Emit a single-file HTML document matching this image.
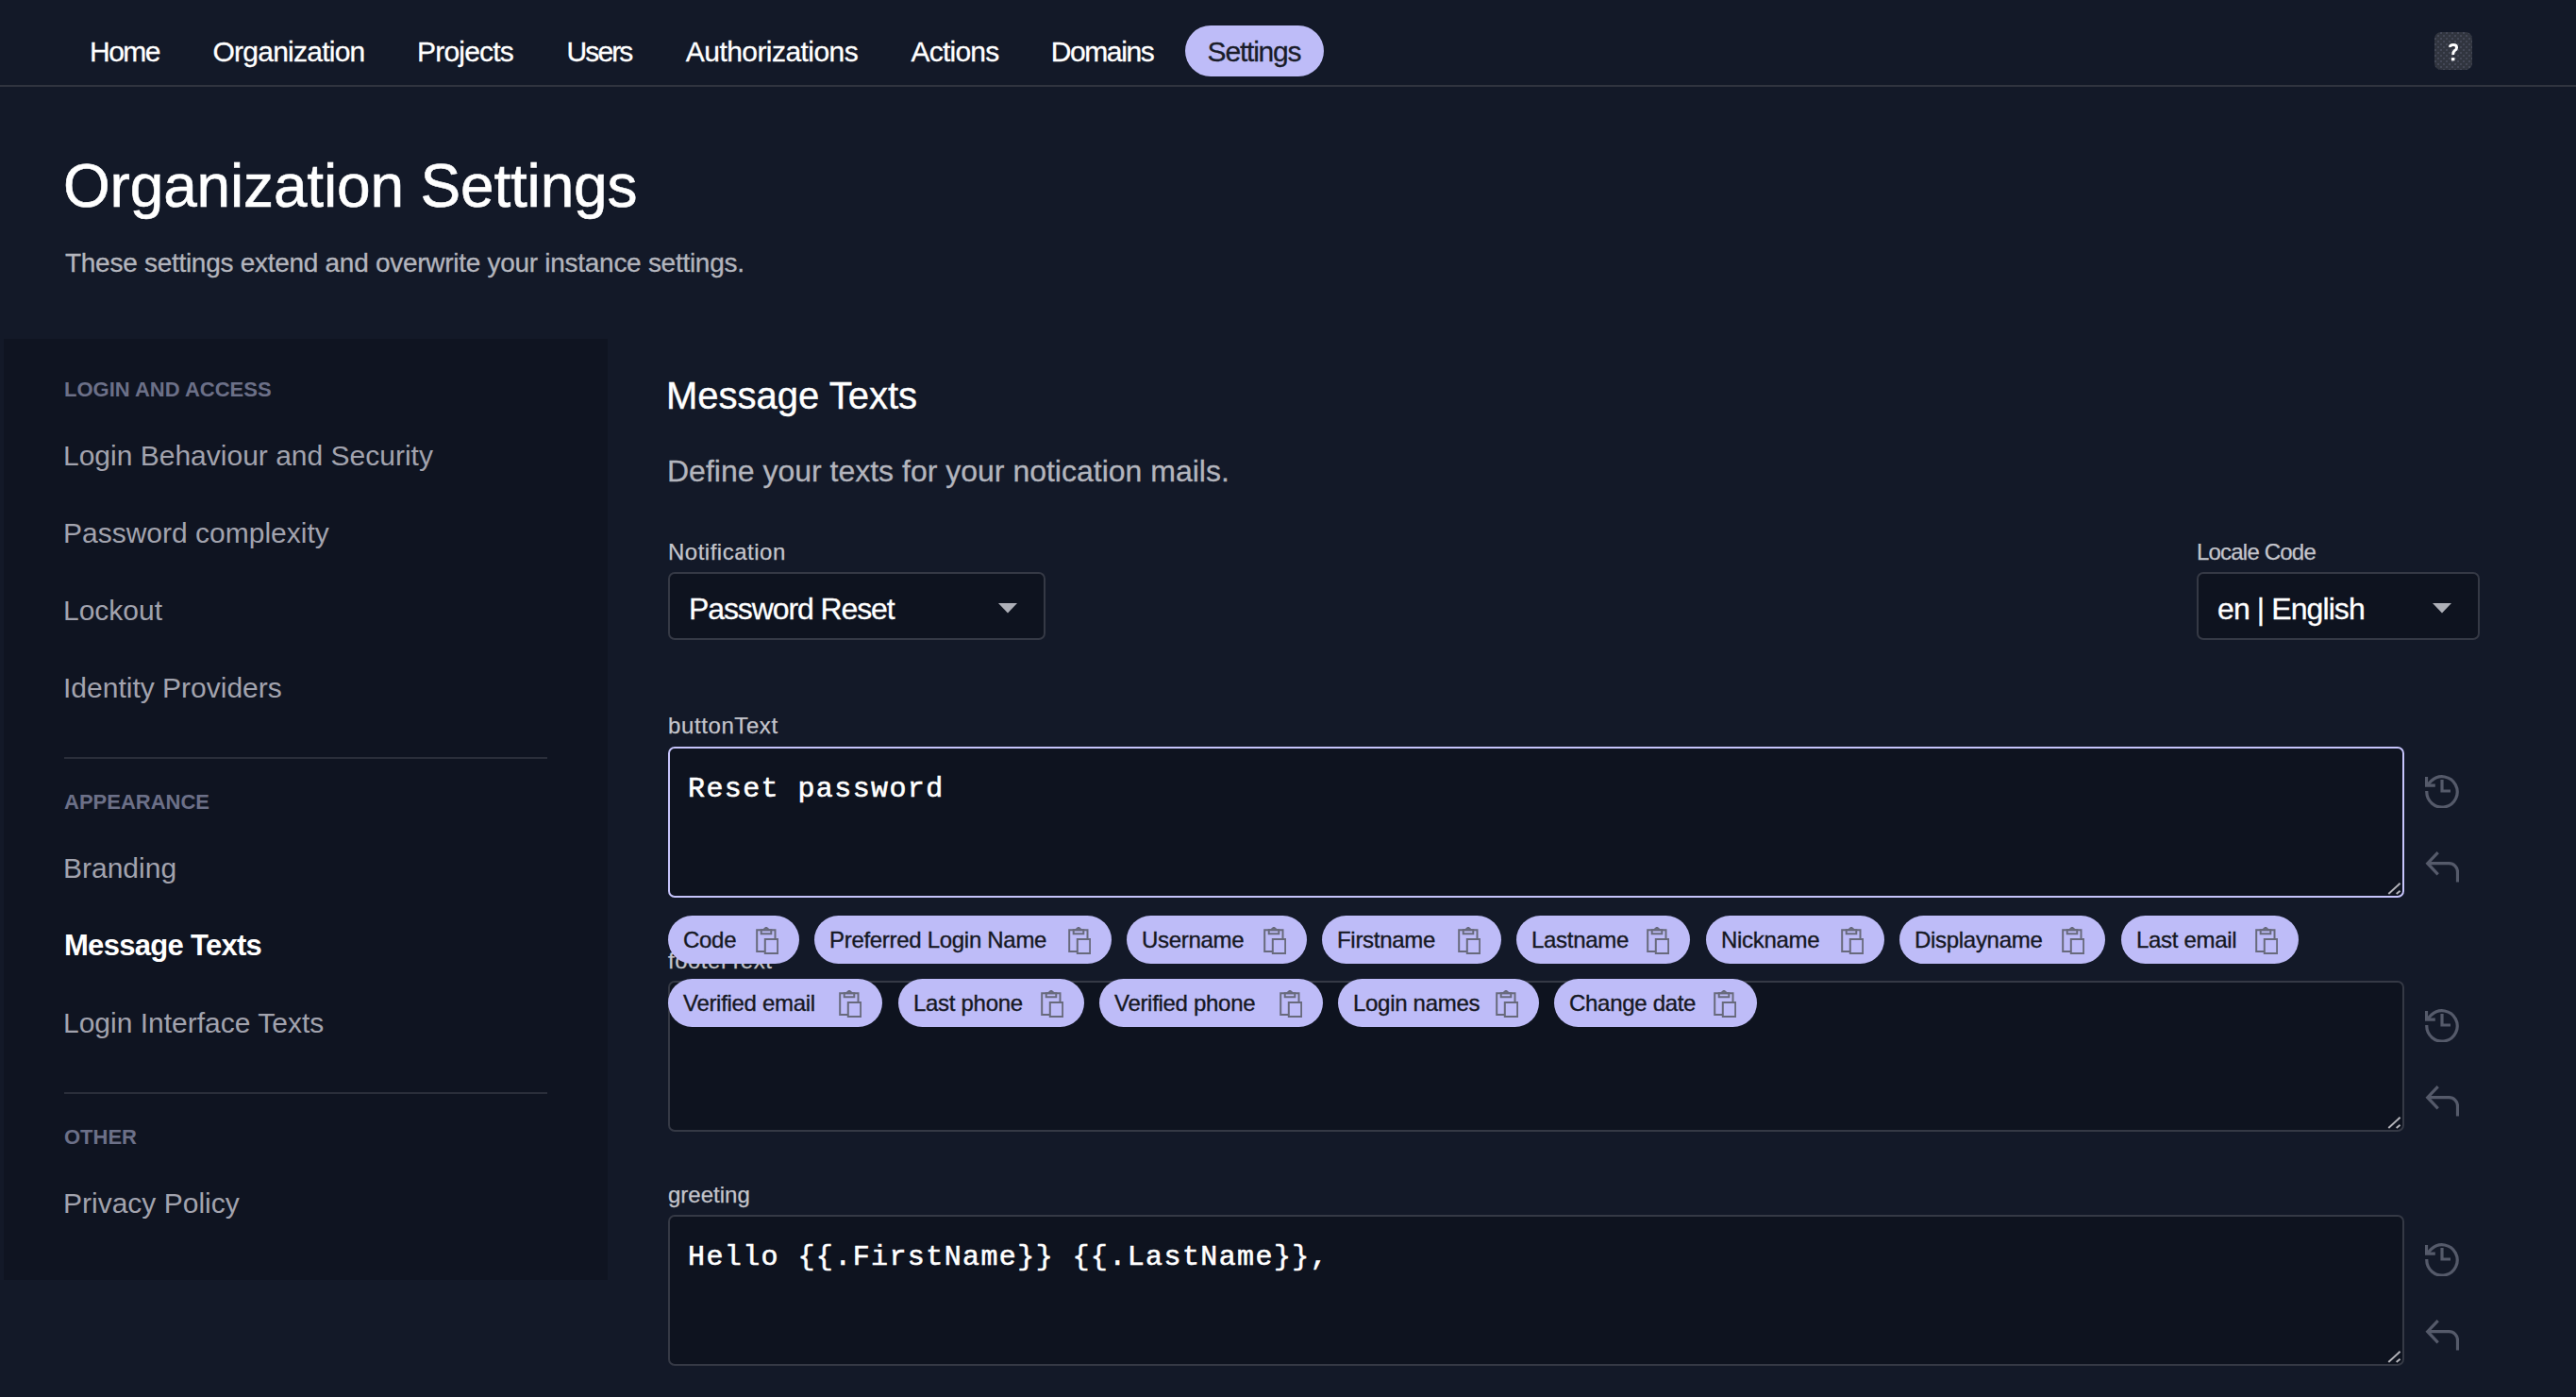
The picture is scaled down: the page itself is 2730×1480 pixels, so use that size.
<!DOCTYPE html>
<html><head><meta charset="utf-8">
<style>
html,body{margin:0;padding:0;}
body{width:2730px;height:1480px;overflow:hidden;background:#131928;position:relative;font-family:"Liberation Sans",sans-serif;}
.a{position:absolute;white-space:nowrap;}
.nav{font-size:30px;line-height:30px;top:40px;color:#ffffff;width:300px;text-align:center;-webkit-text-stroke-width:0.3px;}
.navline{left:0;top:90px;width:2730px;height:2px;background:#30343f;}
.pill{left:1256px;top:27px;width:147px;height:54px;border-radius:27px;background:#bebcf8;}
.help{left:2580px;top:34px;width:40px;height:40px;border-radius:7px;background:radial-gradient(circle,#4a4e5e 0.6px,rgba(0,0,0,0) 1px) 1px 1px/6px 6px,radial-gradient(circle,#4a4e5e 0.6px,rgba(0,0,0,0) 1px) 4px 4px/6px 6px,#31353f;color:#fff;font-weight:bold;font-size:24px;line-height:40px;text-align:center;}
.side{left:4px;top:359px;width:640px;height:997px;background:#0f1421;}
.sh{font-size:22px;line-height:22px;font-weight:bold;color:#6c7088;left:68px;}
.si{font-size:30px;line-height:30px;color:#a2a3ae;left:67px;}
.div{left:68px;width:512px;height:2px;background:#2a2e3a;}
.lbl{font-size:24px;line-height:24px;color:#c4c5cc;-webkit-text-stroke-width:0.25px;}
.sel{border:2px solid #353945;border-radius:7px;background:#0e131f;box-sizing:border-box;}
.ta{border:2px solid #353945;border-radius:7px;background:#0e131f;box-sizing:border-box;left:708px;width:1840px;height:160px;}
.mono{font-family:"Liberation Mono",monospace;font-weight:normal;-webkit-text-stroke-width:0.6px;font-size:30px;line-height:30px;letter-spacing:1.4px;color:#ffffff;}
.chip{height:51px;border-radius:26px;background:#bebcf8;box-sizing:border-box;}
.chip span{position:absolute;left:16px;top:14px;font-size:24px;line-height:24px;color:#161823;letter-spacing:-0.3px;-webkit-text-stroke:0.35px #161823;}
.chip svg{position:absolute;right:22px;top:12px;}
.ico{left:2570px;}
</style></head><body>

<!-- NAV -->
<div class="a pill"></div>
<div class="a nav" style="left:-18px;letter-spacing:-1.5px">Home</div>
<div class="a nav" style="left:156px;letter-spacing:-0.76px">Organization</div>
<div class="a nav" style="left:343px;letter-spacing:-0.8px">Projects</div>
<div class="a nav" style="left:485px;letter-spacing:-1.9px">Users</div>
<div class="a nav" style="left:668px;letter-spacing:-0.55px">Authorizations</div>
<div class="a nav" style="left:862px;letter-spacing:-0.8px">Actions</div>
<div class="a nav" style="left:1018px;letter-spacing:-1.4px">Domains</div>
<div class="a nav" style="left:1179px;letter-spacing:-1.2px;color:#1a1c29">Settings</div>
<div class="a help"><svg width="40" height="40" viewBox="0 0 40 40" style="position:absolute;left:0;top:0"><path d="M16.4 15.8C16.5 14.2 17.8 13.5 20 13.5C22.2 13.5 23.6 14.6 23.6 16.4C23.6 18.1 22.5 18.8 21.3 19.7C20.2 20.5 19.7 21.3 19.7 23.9" stroke="#fff" stroke-width="2.9" fill="none"/><rect x="17.9" y="27.1" width="3.5" height="3.2" fill="#fff"/></svg></div>
<div class="a navline"></div>

<!-- HEADER -->
<div class="a" style="left:67px;top:165px;font-size:64px;line-height:64px;color:#ffffff;letter-spacing:-0.17px;-webkit-text-stroke-width:0.6px">Organization Settings</div>
<div class="a" style="left:69px;top:265px;font-size:28px;line-height:28px;color:#b3b5bd;letter-spacing:-0.28px;-webkit-text-stroke-width:0.3px">These settings extend and overwrite your instance settings.</div>

<!-- SIDEBAR -->
<div class="a side"></div>
<div class="a sh" style="top:402px">LOGIN AND ACCESS</div>
<div class="a si" style="top:468px">Login Behaviour and Security</div>
<div class="a si" style="top:550px">Password complexity</div>
<div class="a si" style="top:632px">Lockout</div>
<div class="a si" style="top:714px">Identity Providers</div>
<div class="a div" style="top:802px"></div>
<div class="a sh" style="top:839px">APPEARANCE</div>
<div class="a si" style="top:905px">Branding</div>
<div class="a si" style="top:986px;left:68px;font-size:31px;line-height:31px;letter-spacing:-0.7px;color:#ffffff;font-weight:bold">Message Texts</div>
<div class="a si" style="top:1069px">Login Interface Texts</div>
<div class="a div" style="top:1157px"></div>
<div class="a sh" style="top:1194px">OTHER</div>
<div class="a si" style="top:1260px">Privacy Policy</div>

<!-- CONTENT -->
<div class="a" style="left:706px;top:399px;font-size:40px;line-height:40px;color:#ffffff;-webkit-text-stroke-width:0.4px">Message Texts</div>
<div class="a" style="left:707px;top:483px;font-size:32px;line-height:32px;color:#b3b5bd;-webkit-text-stroke-width:0.3px">Define your texts for your notication mails.</div>

<div class="a lbl" style="left:708px;top:573px;letter-spacing:0.5px">Notification</div>
<div class="a sel" style="left:708px;top:606px;width:400px;height:72px"></div>
<div class="a" style="left:730px;top:629px;font-size:32px;line-height:32px;color:#fff;letter-spacing:-1.1px;-webkit-text-stroke-width:0.3px">Password Reset</div>
<svg class="a" style="left:1058px;top:639px" width="20" height="11" viewBox="0 0 20 11"><path d="M0 0H20L10 10.5Z" fill="#aeb0b8"/></svg>

<div class="a lbl" style="left:2328px;top:573px;letter-spacing:-0.8px">Locale Code</div>
<div class="a sel" style="left:2328px;top:606px;width:300px;height:72px"></div>
<div class="a" style="left:2350px;top:629px;font-size:32px;line-height:32px;color:#fff;letter-spacing:-0.9px;-webkit-text-stroke-width:0.3px">en | English</div>
<svg class="a" style="left:2578px;top:639px" width="20" height="11" viewBox="0 0 20 11"><path d="M0 0H20L10 10.5Z" fill="#aeb0b8"/></svg>

<!-- buttonText -->
<div class="a lbl" style="left:708px;top:757px;letter-spacing:0.6px">buttonText</div>
<div class="a ta" style="top:791px;border-color:#c6c4fb"></div>
<div class="a mono" style="left:729px;top:821px">Reset password</div>

<!-- footerText -->
<div class="a lbl" style="left:708px;top:1006px;letter-spacing:0.5px">footerText</div>
<div class="a ta" style="top:1039px"></div>

<!-- greeting -->
<div class="a lbl" style="left:708px;top:1254px">greeting</div>
<div class="a ta" style="top:1287px"></div>
<div class="a mono" style="left:729px;top:1317px">Hello {{.FirstName}} {{.LastName}},</div>

<!-- resize handles -->
<svg class="a" style="left:2527px;top:931px" width="18" height="18" viewBox="0 0 18 18" stroke="#b4b4ba" stroke-width="2"><path d="M4.3 16L16.6 4.8M12.7 16L16.6 12.7"/></svg>
<svg class="a" style="left:2527px;top:1179px" width="18" height="18" viewBox="0 0 18 18" stroke="#b4b4ba" stroke-width="2"><path d="M4.3 16L16.6 4.8M12.7 16L16.6 12.7"/></svg>
<svg class="a" style="left:2527px;top:1427px" width="18" height="18" viewBox="0 0 18 18" stroke="#b4b4ba" stroke-width="2"><path d="M4.3 16L16.6 4.8M12.7 16L16.6 12.7"/></svg>

<!-- history/undo icons -->
<svg class="a ico" style="top:820px" width="36" height="36" viewBox="0 0 36 36" fill="none" stroke="#555a6a" stroke-width="3.2"><path d="M1.8 18A16.2 16.2 0 1 0 7 7L2 12.2"/><path d="M1.5 3V12.2H10.8"/><path d="M18 6V18H27"/></svg>
<svg class="a ico" style="top:900px" width="36" height="36" viewBox="0 0 36 36" fill="none" stroke="#555a6a" stroke-width="3.2"><path d="M13.7 3.2L2.7 14.7L13.7 26.4"/><path d="M2.7 14.7H25.5A9 9 0 0 1 34.5 23.7V34.6"/></svg>
<svg class="a ico" style="top:1068px" width="36" height="36" viewBox="0 0 36 36" fill="none" stroke="#555a6a" stroke-width="3.2"><path d="M1.8 18A16.2 16.2 0 1 0 7 7L2 12.2"/><path d="M1.5 3V12.2H10.8"/><path d="M18 6V18H27"/></svg>
<svg class="a ico" style="top:1148px" width="36" height="36" viewBox="0 0 36 36" fill="none" stroke="#555a6a" stroke-width="3.2"><path d="M13.7 3.2L2.7 14.7L13.7 26.4"/><path d="M2.7 14.7H25.5A9 9 0 0 1 34.5 23.7V34.6"/></svg>
<svg class="a ico" style="top:1316px" width="36" height="36" viewBox="0 0 36 36" fill="none" stroke="#555a6a" stroke-width="3.2"><path d="M1.8 18A16.2 16.2 0 1 0 7 7L2 12.2"/><path d="M1.5 3V12.2H10.8"/><path d="M18 6V18H27"/></svg>
<svg class="a ico" style="top:1396px" width="36" height="36" viewBox="0 0 36 36" fill="none" stroke="#555a6a" stroke-width="3.2"><path d="M13.7 3.2L2.7 14.7L13.7 26.4"/><path d="M2.7 14.7H25.5A9 9 0 0 1 34.5 23.7V34.6"/></svg>

<!-- CHIPS -->
<div id="chips">
<div class="a chip" style="left:708px;top:970px;width:139px"><span>Code</span><svg width="24" height="29" viewBox="0 0 24 29" fill="none" stroke="#686a7c" stroke-width="2"><path d="M1.2 3.3H20.5V25.9H1.2Z"/><path d="M5.7 3.3H16.3V7.2H5.7Z"/><path d="M7.9 3.3L11 0.6L14.1 3.3" stroke-linejoin="round"/><path d="M9.8 13H23.2V27.9H9.8Z" fill="#bebcf8"/></svg></div>
<div class="a chip" style="left:863px;top:970px;width:315px"><span>Preferred Login Name</span><svg width="24" height="29" viewBox="0 0 24 29" fill="none" stroke="#686a7c" stroke-width="2"><path d="M1.2 3.3H20.5V25.9H1.2Z"/><path d="M5.7 3.3H16.3V7.2H5.7Z"/><path d="M7.9 3.3L11 0.6L14.1 3.3" stroke-linejoin="round"/><path d="M9.8 13H23.2V27.9H9.8Z" fill="#bebcf8"/></svg></div>
<div class="a chip" style="left:1194px;top:970px;width:191px"><span>Username</span><svg width="24" height="29" viewBox="0 0 24 29" fill="none" stroke="#686a7c" stroke-width="2"><path d="M1.2 3.3H20.5V25.9H1.2Z"/><path d="M5.7 3.3H16.3V7.2H5.7Z"/><path d="M7.9 3.3L11 0.6L14.1 3.3" stroke-linejoin="round"/><path d="M9.8 13H23.2V27.9H9.8Z" fill="#bebcf8"/></svg></div>
<div class="a chip" style="left:1401px;top:970px;width:190px"><span>Firstname</span><svg width="24" height="29" viewBox="0 0 24 29" fill="none" stroke="#686a7c" stroke-width="2"><path d="M1.2 3.3H20.5V25.9H1.2Z"/><path d="M5.7 3.3H16.3V7.2H5.7Z"/><path d="M7.9 3.3L11 0.6L14.1 3.3" stroke-linejoin="round"/><path d="M9.8 13H23.2V27.9H9.8Z" fill="#bebcf8"/></svg></div>
<div class="a chip" style="left:1607px;top:970px;width:184px"><span>Lastname</span><svg width="24" height="29" viewBox="0 0 24 29" fill="none" stroke="#686a7c" stroke-width="2"><path d="M1.2 3.3H20.5V25.9H1.2Z"/><path d="M5.7 3.3H16.3V7.2H5.7Z"/><path d="M7.9 3.3L11 0.6L14.1 3.3" stroke-linejoin="round"/><path d="M9.8 13H23.2V27.9H9.8Z" fill="#bebcf8"/></svg></div>
<div class="a chip" style="left:1808px;top:970px;width:188.5px"><span>Nickname</span><svg width="24" height="29" viewBox="0 0 24 29" fill="none" stroke="#686a7c" stroke-width="2"><path d="M1.2 3.3H20.5V25.9H1.2Z"/><path d="M5.7 3.3H16.3V7.2H5.7Z"/><path d="M7.9 3.3L11 0.6L14.1 3.3" stroke-linejoin="round"/><path d="M9.8 13H23.2V27.9H9.8Z" fill="#bebcf8"/></svg></div>
<div class="a chip" style="left:2013px;top:970px;width:218px"><span>Displayname</span><svg width="24" height="29" viewBox="0 0 24 29" fill="none" stroke="#686a7c" stroke-width="2"><path d="M1.2 3.3H20.5V25.9H1.2Z"/><path d="M5.7 3.3H16.3V7.2H5.7Z"/><path d="M7.9 3.3L11 0.6L14.1 3.3" stroke-linejoin="round"/><path d="M9.8 13H23.2V27.9H9.8Z" fill="#bebcf8"/></svg></div>
<div class="a chip" style="left:2248px;top:970px;width:188px"><span>Last email</span><svg width="24" height="29" viewBox="0 0 24 29" fill="none" stroke="#686a7c" stroke-width="2"><path d="M1.2 3.3H20.5V25.9H1.2Z"/><path d="M5.7 3.3H16.3V7.2H5.7Z"/><path d="M7.9 3.3L11 0.6L14.1 3.3" stroke-linejoin="round"/><path d="M9.8 13H23.2V27.9H9.8Z" fill="#bebcf8"/></svg></div>
<div class="a chip" style="left:708px;top:1037px;width:227px"><span>Verified email</span><svg width="24" height="29" viewBox="0 0 24 29" fill="none" stroke="#686a7c" stroke-width="2"><path d="M1.2 3.3H20.5V25.9H1.2Z"/><path d="M5.7 3.3H16.3V7.2H5.7Z"/><path d="M7.9 3.3L11 0.6L14.1 3.3" stroke-linejoin="round"/><path d="M9.8 13H23.2V27.9H9.8Z" fill="#bebcf8"/></svg></div>
<div class="a chip" style="left:952px;top:1037px;width:197px"><span>Last phone</span><svg width="24" height="29" viewBox="0 0 24 29" fill="none" stroke="#686a7c" stroke-width="2"><path d="M1.2 3.3H20.5V25.9H1.2Z"/><path d="M5.7 3.3H16.3V7.2H5.7Z"/><path d="M7.9 3.3L11 0.6L14.1 3.3" stroke-linejoin="round"/><path d="M9.8 13H23.2V27.9H9.8Z" fill="#bebcf8"/></svg></div>
<div class="a chip" style="left:1165px;top:1037px;width:237px"><span>Verified phone</span><svg width="24" height="29" viewBox="0 0 24 29" fill="none" stroke="#686a7c" stroke-width="2"><path d="M1.2 3.3H20.5V25.9H1.2Z"/><path d="M5.7 3.3H16.3V7.2H5.7Z"/><path d="M7.9 3.3L11 0.6L14.1 3.3" stroke-linejoin="round"/><path d="M9.8 13H23.2V27.9H9.8Z" fill="#bebcf8"/></svg></div>
<div class="a chip" style="left:1418px;top:1037px;width:213px"><span>Login names</span><svg width="24" height="29" viewBox="0 0 24 29" fill="none" stroke="#686a7c" stroke-width="2"><path d="M1.2 3.3H20.5V25.9H1.2Z"/><path d="M5.7 3.3H16.3V7.2H5.7Z"/><path d="M7.9 3.3L11 0.6L14.1 3.3" stroke-linejoin="round"/><path d="M9.8 13H23.2V27.9H9.8Z" fill="#bebcf8"/></svg></div>
<div class="a chip" style="left:1647px;top:1037px;width:215px"><span>Change date</span><svg width="24" height="29" viewBox="0 0 24 29" fill="none" stroke="#686a7c" stroke-width="2"><path d="M1.2 3.3H20.5V25.9H1.2Z"/><path d="M5.7 3.3H16.3V7.2H5.7Z"/><path d="M7.9 3.3L11 0.6L14.1 3.3" stroke-linejoin="round"/><path d="M9.8 13H23.2V27.9H9.8Z" fill="#bebcf8"/></svg></div>
</div>
</body></html>
